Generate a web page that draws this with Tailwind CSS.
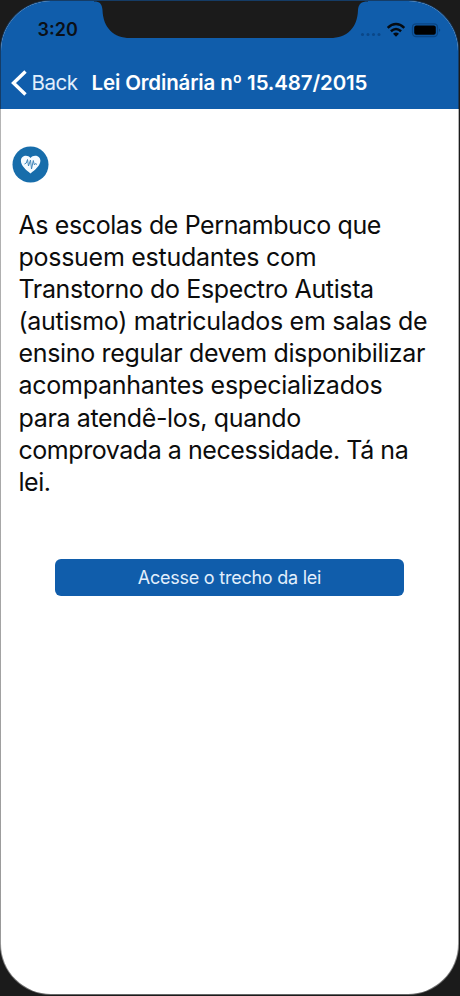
<!DOCTYPE html>
<html lang="pt-BR">
<head>
<meta charset="utf-8">
<meta name="viewport" content="width=device-width, initial-scale=1">
<title>Lei Ordinária nº 15.487/2015</title>
<script src="https://cdn.jsdelivr.net/npm/@tailwindcss/browser@4"></script>
</head>
<body class="bg-[#1b1b1b] font-['Inter',sans-serif]">
<div class="w-[460px] h-[996px] overflow-hidden">
  <div class="w-[459px] h-[995px] pl-px pt-px pr-px pb-px rounded-[51px] bg-[linear-gradient(#153c66_109px,#b5b5b5_109px,#999_940px,#666)]">
  <div class="relative flex flex-col w-[457px] h-[993px] rounded-[50px] bg-white overflow-hidden">
    <svg class="absolute left-[93px] top-[-1px]" width="274" height="40" viewBox="0 0 274 40"><path fill="#1b1b1b" d="M0 0H274V1.500C267 1.500 264.500 4 264 10C263.500 28 253 38 236 38H36C20 38 9 28 8.500 10C8 4 6 1.500 0 1.500Z"/></svg>
    <header class="flex flex-col h-[108px] shrink-0 bg-[#105dab]">
      <div class="flex items-center justify-between h-[57px] pl-[36.5px] pr-[15px]">
        <span class="text-[18px] font-semibold text-[#0b1017]">3:20</span>
        <svg width="86" height="20" viewBox="0 0 86 20">
          <g fill="#0a4788"><circle cx="5.500" cy="14.500" r="1.500"/><circle cx="11" cy="14.500" r="1.500"/><circle cx="16.500" cy="14.500" r="1.500"/><circle cx="22" cy="14.500" r="1.500"/></g>
          <g fill="none" stroke="#050b12" stroke-width="2.500"><path d="M30.700 7.800Q39 .2 47.300 7.800"/><path d="M33.900 11.300Q39 6.700 44.100 11.300"/></g>
          <path fill="#050b12" d="M36 13.700Q39 11.300 42 13.700L39 16.700Z"/>
          <rect x="55.500" y="3.800" width="25" height="12.700" rx="3.500" fill="none" stroke="#0b4684" stroke-width="1.300"/>
          <rect x="57.200" y="5.500" width="21.600" height="9.300" rx="2" fill="#000"/>
          <path d="M82 8.500Q84.500 10.200 82 12Z" fill="#0b4684"/>
        </svg>
      </div>
      <div class="flex items-center h-[50px] pl-[9px] text-white">
        <svg width="18" height="28" viewBox="0 0 18 28"><path d="M15.500 2.500L3.500 14L15.500 25.500" fill="none" stroke="#fff" stroke-width="3.400"/></svg>
        <span class="ml-[3.5px] w-[60px] text-[20.5px] tracking-[-0.5px] text-[#e2effc] whitespace-nowrap">Back</span>
        <h1 class="text-[20.5px] font-semibold whitespace-nowrap tracking-[-0.15px]">Lei Ordinária nº 15.487/2015</h1>
      </div>
    </header>
    <main class="flex flex-col pt-[37px]">
      <svg class="ml-[11px]" width="37" height="37" viewBox="0 0 37 37">
        <circle cx="18.500" cy="18.500" r="18" fill="#176dab"/>
        <path fill="#f5fbff" d="M18.500 27.500C14 24 8.900 19.500 8.900 14.800C8.900 9.200 15.800 8.200 18.500 12C21.200 8.200 28.400 9.200 28.400 14.800C28.400 19.500 23 24 18.500 27.500Z"/>
        <path fill="none" stroke="#4186b9" stroke-width="1" stroke-linejoin="round" d="M12.500 18L14.300 17L15.500 13.500L16.500 20L18.500 14L19.500 23L21.300 14.500L22.400 19L23.500 17.500L25 18.500"/>
      </svg>
      <p class="mt-[26px] ml-[17.5px] text-[25px] leading-[32.1px] text-[#0c0c0c] whitespace-nowrap">
        <span class="block tracking-[-0.4px]">As escolas de Pernambuco que</span>
        <span class="block tracking-[-0.27px]">possuem estudantes com</span>
        <span class="block tracking-[-0.37px]">Transtorno do Espectro Autista</span>
        <span class="block tracking-[-0.29px]">(autismo) matriculados em salas de</span>
        <span class="block tracking-[-0.34px]">ensino regular devem disponibilizar</span>
        <span class="block tracking-[-0.27px]">acompanhantes especializados</span>
        <span class="block tracking-[-0.35px]">para atendê-los, quando</span>
        <span class="block tracking-[-0.45px]">comprovada a necessidade. Tá na</span>
        <span class="block tracking-[-0.5px]">lei.</span>
      </p>
      <button class="mt-[61px] ml-[54px] w-[349px] h-[37px] pt-px rounded-[6px] bg-[#105dab] text-[18px] tracking-[-0.24px] text-[#e2effc]">Acesse o trecho da lei</button>
    </main>
  </div>
  </div>
</div>
</body>
</html>
